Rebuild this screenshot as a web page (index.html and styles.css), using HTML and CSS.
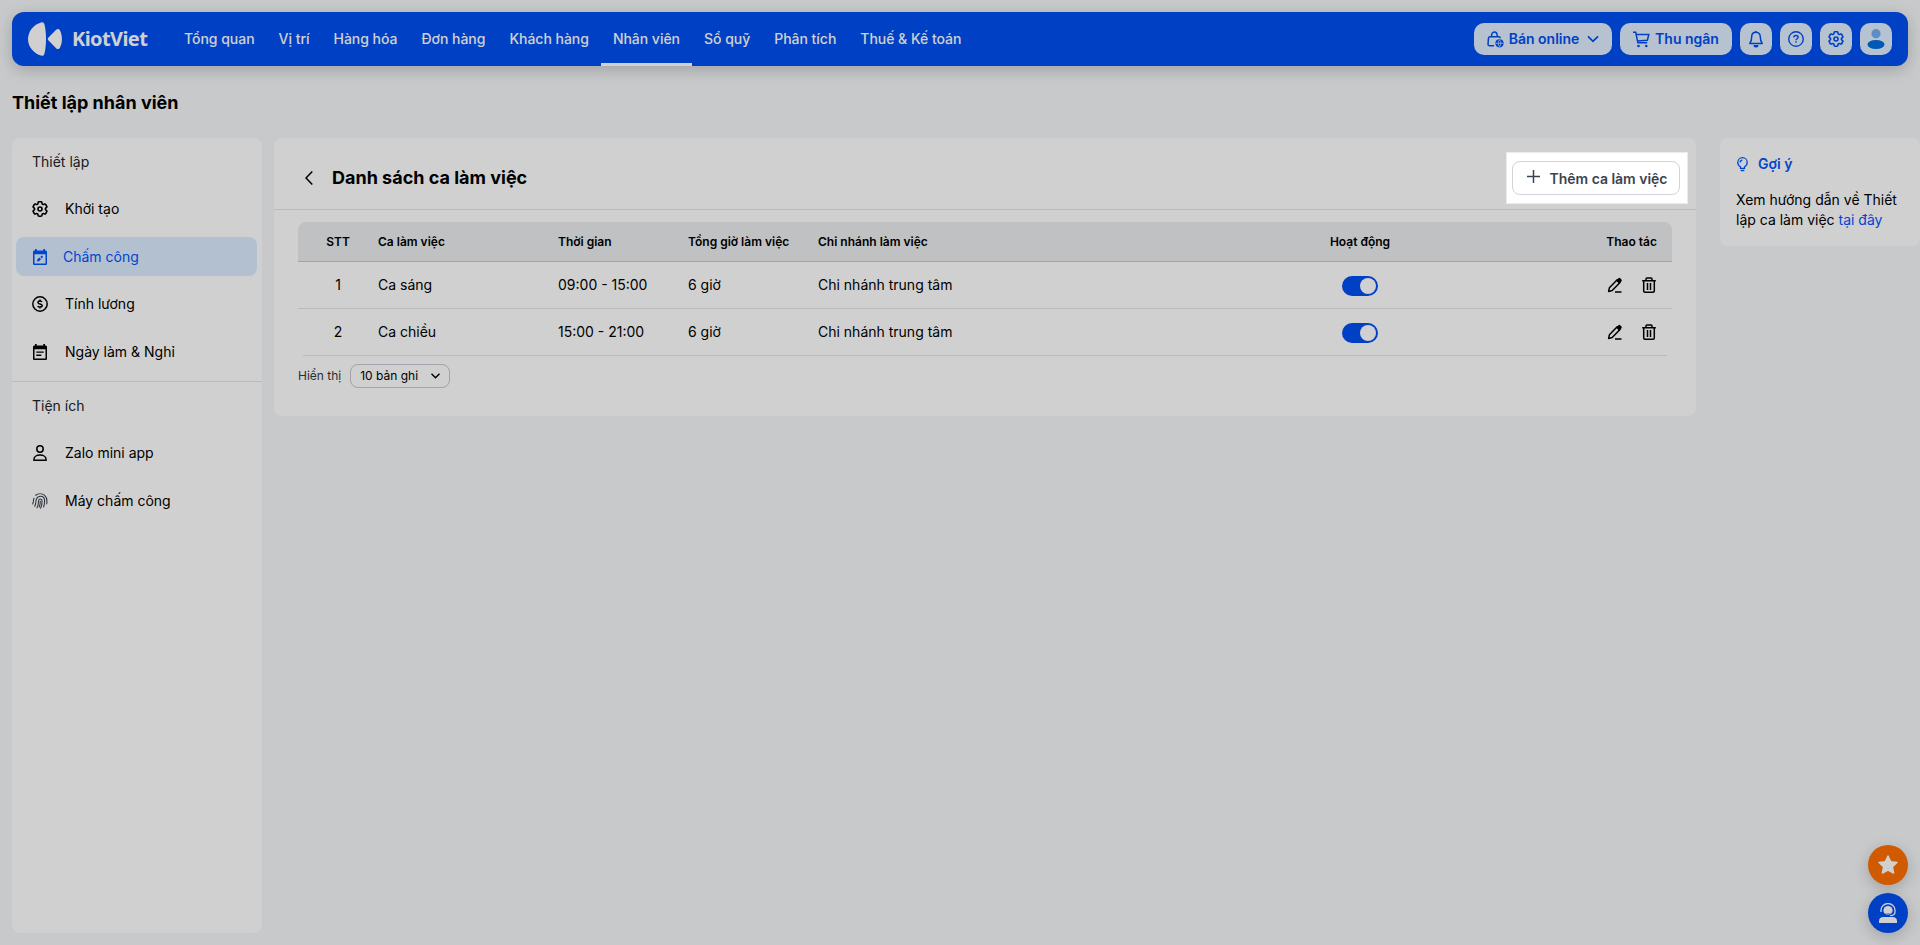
FILE: index.html
```html
<!DOCTYPE html>
<html lang="vi">
<head>
    <meta charset="UTF-8">
    <meta name="viewport" content="width=device-width, initial-scale=1.0">
    <title>Thiết lập nhân viên - KiotViet</title>
    <link rel="stylesheet" href="styles.css">
</head>
<body>
    <!-- shared icons -->
    <svg class="sprite" width="0" height="0">
        <symbol id="i-gear" viewBox="2 2 20 20">
            <path fill="none" stroke="currentColor" stroke-width="2" stroke-linejoin="round" d="M9.594 3.94c.09-.542.56-.94 1.11-.94h2.593c.55 0 1.02.398 1.11.94l.213 1.281c.063.374.313.686.645.87.074.04.147.083.22.127.325.196.72.257 1.075.124l1.217-.456a1.125 1.125 0 0 1 1.37.49l1.296 2.247a1.125 1.125 0 0 1-.26 1.431l-1.003.827c-.293.241-.438.613-.43.992a7.723 7.723 0 0 1 0 .255c-.008.378.137.75.43.991l1.004.827c.424.35.534.955.26 1.43l-1.298 2.247a1.125 1.125 0 0 1-1.369.491l-1.217-.456c-.355-.133-.75-.072-1.076.124a6.47 6.47 0 0 1-.22.128c-.331.183-.581.495-.644.869l-.213 1.281c-.09.543-.56.94-1.11.94h-2.594c-.55 0-1.019-.398-1.11-.94l-.213-1.281c-.062-.374-.312-.686-.644-.87a6.52 6.52 0 0 1-.22-.127c-.325-.196-.72-.257-1.076-.124l-1.217.456a1.125 1.125 0 0 1-1.369-.49l-1.297-2.247a1.125 1.125 0 0 1 .26-1.431l1.004-.827c.292-.24.437-.613.43-.991a6.932 6.932 0 0 1 0-.255c.007-.38-.138-.751-.43-.992l-1.004-.827a1.125 1.125 0 0 1-.26-1.43l1.297-2.247a1.125 1.125 0 0 1 1.37-.491l1.216.456c.356.133.751.072 1.076-.124.072-.044.146-.086.22-.128.332-.183.582-.495.644-.869l.214-1.28Z"/>
            <circle cx="12" cy="12" r="2.5" fill="none" stroke="currentColor" stroke-width="2"/>
        </symbol>
        <symbol id="i-pen" viewBox="0 0 16 16">
            <path fill="none" stroke="currentColor" stroke-width="1.5" stroke-linejoin="round" d="M1.6 14.4l.8-3.6 7.8-8 2.8 2.8-7.8 8zM8 15h6.5"/>
            <path fill="currentColor" d="M9 3.6l2.2-2.2a1.6 1.6 0 0 1 2.3 0l.8.8a1.6 1.6 0 0 1 0 2.3L12.2 6.7z"/>
        </symbol>
        <symbol id="i-trash" viewBox="0 0 16 16">
            <path fill="none" stroke="currentColor" stroke-width="1.5" d="M1.2 3.7h13.6M5 3.4V1.9c0-.6.4-1 1-1h4c.6 0 1 .4 1 1v1.5M2.7 4v10c0 .7.5 1.2 1.2 1.2h8.2c.7 0 1.2-.5 1.2-1.2V4M6.5 6v7M9.5 6v7"/>
        </symbol>
    </svg>

    <header class="topbar">
        <a class="logo">
            <svg width="34" height="34" viewBox="0 0 34 34" fill="#fff">
                <path d="M13 .4C6 2.4 0 9 0 17s6 14.600 13 16.600c2 .5 2.800-.1 3.400-1.900C17.300 28.500 18 23 18 17S17.300 5.500 16.400 2.300C15.800.5 15-.1 13 .4z"/>
                <path d="M20.300 15.800l7.800-8c1.200-1.200 2.900-1.300 3.800.4 2.700 5 2.700 12.600 0 17.600-.9 1.700-2.600 1.600-3.800.4l-7.800-8c-.7-.8-.7-1.600 0-2.400z"/>
            </svg>
            <span>KiotViet</span>
        </a>
        <nav class="menu">
            <a>Tổng quan</a>
            <a>Vị trí</a>
            <a>Hàng hóa</a>
            <a>Đơn hàng</a>
            <a>Khách hàng</a>
            <a class="active">Nhân viên</a>
            <a>Sổ quỹ</a>
            <a>Phân tích</a>
            <a>Thuế &amp; Kế toán</a>
        </nav>
        <div class="tools">
            <button class="tool online">
                <svg width="17" height="17" viewBox="0 0 17 17" fill="none" stroke="currentColor" stroke-width="1.500">
                    <path d="M7 14.800H2.700c-1 0-1.800-.7-1.700-1.700l.5-6c.1-.9.700-1.400 1.600-1.400h8.600c.9 0 1.500.5 1.600 1.400M4.500 5.500C4.500 2.600 5.600 1 7.400 1s2.900 1.600 2.900 4.500"/>
                    <circle cx="12.500" cy="12.300" r="4.100" fill="currentColor" stroke="none"/>
                    <path d="M8.800 12.300h7.400M12.500 8.800c-1.700 2-1.700 5 0 7 1.700-2 1.700-5 0-7z" stroke="#dcecff" stroke-width=".7"/>
                </svg>
                Bán online
                <svg class="caret" width="12" height="8" viewBox="0 0 12 8" fill="none" stroke="currentColor" stroke-width="1.700"><path d="M1 1.300l5 5 5-5"/></svg>
            </button>
            <button class="tool cashier">
                <svg width="17" height="17" viewBox="0 0 17 17" fill="none" stroke="currentColor" stroke-width="1.500">
                    <path d="M0 1.300h2.700l2.200 10.500h9.300M3.100 3.500h12.700l-1.400 5.700-10 .8"/>
                    <circle cx="5.500" cy="15" r="1.300" fill="currentColor" stroke="none"/>
                    <circle cx="13.300" cy="15" r="1.300" fill="currentColor" stroke="none"/>
                </svg>
                Thu ngân
            </button>
            <button class="tool square">
                <svg width="14" height="17" viewBox="0 0 14 17" fill="none" stroke="currentColor" stroke-width="1.500" stroke-linejoin="round">
                    <path d="M7 1.300c-2.700 0-4.300 2-4.300 4.500 0 4-1 5.300-1.900 6.600h12.400c-.9-1.300-1.900-2.600-1.900-6.600C11.300 3.300 9.700 1.300 7 1.300z"/>
                    <path d="M7 0v1.300M5.200 14.800c.8 1.200 2.800 1.200 3.600 0z" fill="currentColor"/>
                </svg>
            </button>
            <button class="tool square">
                <svg width="16" height="16" viewBox="0 0 17 17" fill="none" stroke="currentColor" stroke-width="1.500">
                    <circle cx="8.500" cy="8.500" r="7.700"/>
                    <path d="M6.200 6.900c0-1.300 1-2.200 2.300-2.200s2.300.9 2.300 2c0 1.500-2.300 1.600-2.300 3.200M8.500 11v1.600"/>
                </svg>
            </button>
            <button class="tool square"><svg width="16" height="16"><use href="#i-gear"/></svg></button>
            <button class="tool square avatar">
                <svg width="18" height="20" viewBox="0 0 18 20">
                    <circle cx="9" cy="4.700" r="4.600" fill="#72adf5"/>
                    <ellipse cx="9" cy="15.500" rx="8.500" ry="4.500" fill="#006ee0"/>
                </svg>
            </button>
        </div>
    </header>

    <h1>Thiết lập nhân viên</h1>

    <div class="layout">
        <aside class="sidebar">
            <div class="group-title">Thiết lập</div>
            <a class="side-item"><svg width="16" height="16"><use href="#i-gear"/></svg>Khởi tạo</a>
            <a class="side-item active">
                <svg width="16" height="16" viewBox="0 0 16 16" fill="currentColor">
                    <path fill-rule="evenodd" d="M3 0h1.700v1.400h6.600V0H13v1.400h.5c.9 0 1.500.6 1.500 1.500v11.500c0 .9-.6 1.600-1.500 1.600h-11C1.600 16 1 15.300 1 14.400V2.900c0-.9.600-1.500 1.500-1.500H3zM2.500 5.300v9.200h11V5.300z"/>
                    <path d="M5 12.600l.3-2 2-2 1.700 1.700-2 2zM8.300 7.800l1.800-1.300L11 7.700 9.700 9.400z"/>
                </svg>
                Chấm công
            </a>
            <a class="side-item">
                <svg width="16" height="16" viewBox="0 0 16 16" fill="none" stroke="currentColor" stroke-width="1.500">
                    <circle cx="8" cy="8" r="7.200"/>
                    <path d="M10.100 6C9.700 5.200 9 4.900 8 4.900c-1.200 0-2 .6-2 1.500 0 2.200 4.200 1 4.200 3.200 0 .9-.9 1.500-2.200 1.500-1.100 0-1.900-.4-2.200-1.200M8 3.500v1.400M8 11v1.400"/>
                </svg>
                Tính lương
            </a>
            <a class="side-item">
                <svg width="16" height="16" viewBox="0 0 16 16" fill="currentColor">
                    <path fill-rule="evenodd" d="M3 0h1.700v1.400h6.600V0H13v1.400h.5c.9 0 1.500.6 1.500 1.500v11.500c0 .9-.6 1.600-1.500 1.600h-11C1.600 16 1 15.300 1 14.400V2.900c0-.9.600-1.500 1.500-1.500H3zM2.500 5.300v9.200h11V5.300z"/>
                    <path d="M4.300 7.400h7.400v1.400H4.300zM4.300 10.500h5v1.400h-5z"/>
                </svg>
                Ngày làm &amp; Nghỉ
            </a>
            <hr>
            <div class="group-title">Tiện ích</div>
            <a class="side-item">
                <svg width="16" height="16" viewBox="0 0 16 16" fill="none" stroke="currentColor" stroke-width="1.500">
                    <circle cx="8" cy="4" r="3.200"/>
                    <path d="M2 15.200v-1c0-2.300 2.400-4.200 6-4.200s6 1.900 6 4.200v1z"/>
                </svg>
                Zalo mini app
            </a>
            <a class="side-item">
                <svg class="finger" width="16" height="16" viewBox="0 0 16 16" fill="none" stroke="currentColor" stroke-width="1.100" stroke-linecap="round">
                    <path d="M3.600 2.200C6.200.2 10 .2 12.400 2.200 14.800 4.300 15.400 7 14.700 11M.7 11c.9-2.200.6-4 1.300-5.800M2.700 13.200c1.500-2.600.9-4.700 1.600-6.600C5 4.400 6.500 3.300 8.300 3.300c2.700 0 4.300 2 4.300 4.500 0 2.200-.3 4.400-1 6.200M5 14.800c1.300-2.300 1.500-4.800 1.600-6.800.2-2.700 3.500-2.600 3.500.1 0 2.600-.5 5-1.500 7.200M8.300 8.300c0 2.200-.3 4-1 5.700"/>
                </svg>
                Máy chấm công
            </a>
        </aside>

        <main class="panel">
            <div class="panel-head">
                <svg class="back" width="8" height="14" viewBox="0 0 8 14" fill="none" stroke="currentColor" stroke-width="1.500"><path d="M7.300.5L1 7l6.300 6.500"/></svg>
                <h2>Danh sách ca làm việc</h2>
                <div class="spotlight">
                    <button class="add-btn">
                        <svg width="13" height="13" viewBox="0 0 13 13" stroke="currentColor" stroke-width="1.500"><path d="M6.500 0v13M0 6.500h13"/></svg>
                        Thêm ca làm việc
                    </button>
                </div>
            </div>

            <div class="table">
                <div class="row head">
                    <span class="center">STT</span>
                    <span>Ca làm việc</span>
                    <span>Thời gian</span>
                    <span>Tổng giờ làm việc</span>
                    <span>Chi nhánh làm việc</span>
                    <span class="center">Hoạt động</span>
                    <span class="right">Thao tác</span>
                </div>
                <div class="row">
                    <span class="center">1</span>
                    <span>Ca sáng</span>
                    <span>09:00 - 15:00</span>
                    <span>6 giờ</span>
                    <span>Chi nhánh trung tâm</span>
                    <span class="center"><i class="switch"></i></span>
                    <span class="actions">
                        <svg width="16" height="16"><use href="#i-pen"/></svg>
                        <svg width="16" height="16"><use href="#i-trash"/></svg>
                    </span>
                </div>
                <div class="row">
                    <span class="center">2</span>
                    <span>Ca chiều</span>
                    <span>15:00 - 21:00</span>
                    <span>6 giờ</span>
                    <span>Chi nhánh trung tâm</span>
                    <span class="center"><i class="switch"></i></span>
                    <span class="actions">
                        <svg width="16" height="16"><use href="#i-pen"/></svg>
                        <svg width="16" height="16"><use href="#i-trash"/></svg>
                    </span>
                </div>
            </div>

            <div class="pager">
                Hiển thị
                <div class="select">
                    10 bản ghi
                    <svg width="9" height="6" viewBox="0 0 9 6" fill="none" stroke="currentColor" stroke-width="1.400"><path d="M.5.700l4 4 4-4"/></svg>
                </div>
            </div>
        </main>

        <aside class="hint">
            <div class="hint-title">
                <svg width="11" height="15" viewBox="0 0 11 15" fill="none" stroke="currentColor" stroke-width="1.300">
                    <path d="M3.500 11.300V9.800C1.900 8.900.8 7.500.8 5.500c0-2.700 2-4.800 4.700-4.800s4.700 2.100 4.700 4.800c0 2-1.100 3.400-2.700 4.300v1.500zM3.700 13.500h3.600M3.200 5.400c0-1.300.9-2.200 2.200-2.200"/>
                </svg>
                Gợi ý
            </div>
            <p>Xem hướng dẫn về Thiết lập ca làm việc <a>tại đây</a></p>
        </aside>
    </div>

    <div class="floating">
        <button class="fab star">
            <svg width="20" height="20" viewBox="0 0 20 20" fill="#fff" stroke="#fff" stroke-width="1.500" stroke-linejoin="round"><path d="M10 1l2.700 5.700 6.300.8-4.600 4.300 1.200 6.200L10 15l-5.600 3 1.200-6.200L1 7.500l6.300-.8z"/></svg>
        </button>
        <button class="fab support">
            <svg width="18" height="20" viewBox="0 0 18 20" fill="#fff">
                <path d="M0 20v-2c0-2.400 1.800-4 4.500-4h9c2.700 0 4.500 1.600 4.500 4v2z"/>
                <circle cx="9" cy="7.500" r="4.600"/>
                <path d="M2 9V7C2 3.300 5.200.6 9 .6S16 3.300 16 7v2c0 2.500-2 3.700-4.800 3.700" fill="none" stroke="#fff" stroke-width="1.300"/>
                <path d="M5.500 10.600c1.500 1.200 3 .2 4.500.4 1.200.2 2 .4 3-.6" fill="none" stroke="#004ff2" stroke-width=".9"/>
            </svg>
        </button>
    </div>
</body>
</html>
```

FILE: styles.css
```css
* {
    box-sizing: border-box;
}

body {
    margin: 0;
    height: 945px;
    padding: 12px 0 12px 12px;
    display: flex;
    flex-direction: column;
    background: #f5f7f9;
    color: #000;
    font-family: Inter, "Open Sans", sans-serif;
    font-size: 14px;
    line-height: 20px;
    overflow: hidden;
}

button {
    border: none;
    padding: 0;
    font: inherit;
    cursor: pointer;
}

svg {
    display: block;
    flex: none;
}

.sprite {
    position: absolute;
}

/* Top bar */
.topbar {
    display: flex;
    align-items: center;
    height: 54px;
    margin-right: 12px;
    padding: 0 16px;
    border-radius: 12px;
    background: #004ff2;
    box-shadow: 0 4px 16px rgba(0, 0, 0, 0.2);
    flex: none;
}

.logo {
    display: flex;
    align-items: center;
    gap: 10px;
    width: 144px;
    color: #fff;
    font-family: "Noto Sans", sans-serif;
    font-size: 20px;
    font-weight: 700;
    letter-spacing: -0.6px;
}

.menu {
    display: flex;
    height: 100%;
}

.menu a {
    display: flex;
    align-items: center;
    padding: 0 12px;
    color: #fff;
    font-weight: 500;
    letter-spacing: -0.025px;
}

.menu a.active {
    background: linear-gradient(#fff, #fff) bottom / 100% 3px no-repeat;
}

.tools {
    display: flex;
    gap: 8px;
    margin-left: auto;
}

.tool {
    display: flex;
    align-items: center;
    justify-content: center;
    height: 32px;
    border-radius: 10px;
    background: #dfeeff;
    color: #004ff2;
    font-weight: 600;
}

.online {
    width: 138px;
    gap: 5px;
}

.caret {
    margin-left: 3px;
}

.cashier {
    width: 112px;
    gap: 5px;
}

.square {
    width: 32px;
}

h1 {
    margin: 24px 0 22px;
    font-size: 18px;
    line-height: 26px;
    font-weight: 700;
}

.layout {
    display: flex;
    align-items: flex-start;
    flex: 1;
}

/* Sidebar */
.sidebar {
    align-self: stretch;
    width: 250px;
    margin-right: 12px;
    border-radius: 8px;
    background: #fff;
}

.group-title {
    padding: 14px 20px 12.5px;
    color: #212529;
}

.side-item {
    display: flex;
    align-items: center;
    gap: 17px;
    height: 39px;
    margin: 5px 5px 8.5px 4px;
    padding: 0 16px;
    border-radius: 8px;
}

.side-item.active {
    gap: 15px;
    background: #dcecff;
    color: #0055ff;
}

.finger {
    color: #3b4350;
}

.sidebar hr {
    height: 1px;
    margin: 10px 0 0;
    border: none;
    background: #e3e4e6;
}

/* Main panel */
.panel {
    width: 1422px;
    height: 278px;
    margin-right: 24px;
    border-radius: 8px;
    background: #fff;
}

.panel-head {
    display: flex;
    align-items: center;
    height: 72px;
    padding: 8px 16px 0 31px;
    border-bottom: 1px solid #e3e4e6;
}

h2 {
    margin: 0 auto 0 19px;
    font-size: 18px;
    line-height: 26px;
    font-weight: 700;
}

.add-btn {
    display: flex;
    align-items: center;
    justify-content: center;
    gap: 10px;
    width: 168px;
    height: 34px;
    padding: 3px 0 0 2px;
    border: 1px solid #cfd3da;
    border-radius: 8px;
    background: #fff;
    color: #3b4350;
    font-weight: 600;
    letter-spacing: -0.02px;
}

.add-btn svg {
    margin-bottom: 5px;
}

/* onboarding mask around the button */
.spotlight {
    position: relative;
}

.spotlight::after {
    content: "";
    position: absolute;
    inset: -9px -8px -9px -6px;
    z-index: 100;
    border: 1px solid rgba(0, 0, 0, 0.08);
    box-shadow: 0 0 0 2000px rgba(0, 0, 0, 0.185);
    pointer-events: none;
}

.table {
    margin: 12px 24px 0;
}

.row {
    display: grid;
    grid-template-columns: 80px 180px 130px 130px 492px 100px 1fr;
    align-items: center;
    height: 47px;
    padding-right: 15px;
    border-bottom: 1px solid #e3e4e6;
}

.row.head {
    height: 40px;
    border-radius: 8px 8px 0 0;
    border-bottom-color: #c6c9d1;
    background: #ebedef;
    font-size: 12px;
    font-weight: 600;
}

/* last line stops short of the table edges */
.row:last-child {
    border-bottom: none;
    padding-bottom: 1px;
    background: linear-gradient(#e3e4e6, #e3e4e6) bottom / calc(100% - 10px) 1px no-repeat;
}

.center {
    text-align: center;
}

.right {
    text-align: right;
}

.switch {
    display: block;
    width: 36px;
    height: 20px;
    margin: 2px auto 0;
    padding: 2px;
    border-radius: 10px;
    background: #004ff2;
}

.switch::before {
    content: "";
    display: block;
    width: 16px;
    height: 16px;
    margin-left: auto;
    border-radius: 50%;
    background: #fff;
}

.actions {
    display: flex;
    justify-content: flex-end;
    gap: 18px;
}

.pager {
    display: flex;
    align-items: center;
    gap: 9px;
    margin: 8px 24px 0;
    color: #33373f;
    font-size: 12px;
}

.select {
    display: flex;
    align-items: center;
    justify-content: space-between;
    width: 100px;
    height: 24px;
    padding: 0 9px;
    border: 1px solid #c6c9d1;
    border-radius: 8px;
    color: #000;
}

/* Hint card */
.hint {
    flex: 1;
    height: 108px;
    padding: 16px;
    border-radius: 8px;
    background: #fff;
}

.hint-title {
    display: flex;
    align-items: center;
    gap: 10px;
    padding-left: 1px;
    color: #0055ff;
    font-weight: 600;
}

.hint p {
    margin: 16px 0 0;
}

.hint a {
    color: #0055ff;
}

/* Floating buttons */
.floating {
    position: fixed;
    right: 12px;
    bottom: 12px;
    display: flex;
    flex-direction: column;
    gap: 8px;
}

.fab {
    display: flex;
    align-items: center;
    justify-content: center;
    width: 40px;
    height: 40px;
    border-radius: 50%;
    box-shadow: 0 4px 16px rgba(0, 0, 0, 0.2);
}

.star {
    background: #ff6f00;
}

.support {
    background: #004ff2;
}
```
